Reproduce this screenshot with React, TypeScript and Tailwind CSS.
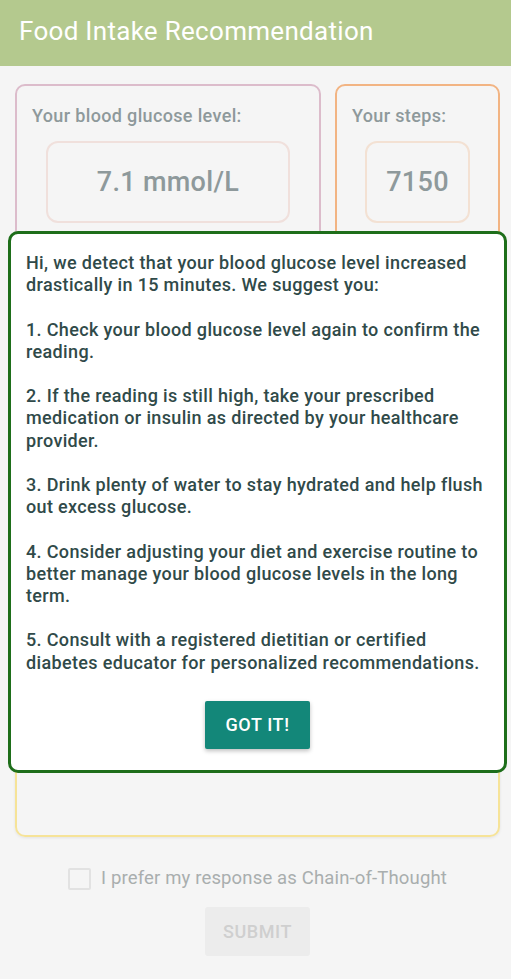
import { useState } from 'react'

const tips = [
  ['Hi, we detect that your blood glucose level increased', 'drastically in 15 minutes. We suggest you:'],
  ['1. Check your blood glucose level again to confirm the', 'reading.'],
  ['2. If the reading is still high, take your prescribed', 'medication or insulin as directed by your healthcare', 'provider.'],
  ['3. Drink plenty of water to stay hydrated and help flush', 'out excess glucose.'],
  ['4. Consider adjusting your diet and exercise routine to', 'better manage your blood glucose levels in the long', 'term.'],
  ['5. Consult with a registered dietitian or certified', 'diabetes educator for personalized recommendations.'],
]

function StatCard({ label, value, outer, inner, width, innerWidth }: {
  label: string
  value: string
  outer: string
  inner: string
  width: string
  innerWidth: string
}) {
  return (
    <div className={`${width} shrink-0 h-[190px] rounded-[10px] border-2 ${outer} pt-[19px] px-[15px]`}>
      <div className="text-[18px] tracking-[0.35px] font-medium text-[#8e999b] leading-[22px] whitespace-nowrap">{label}</div>
      <div className={`${innerWidth} mx-auto mt-[14px] h-[82px] rounded-[12px] border-2 ${inner} flex items-center justify-center text-[27px] tracking-[0.3px] font-medium text-[#8e999b]`}>
        {value}
      </div>
    </div>
  )
}

export default function App() {
  const [open, setOpen] = useState(true)
  const [cot, setCot] = useState(false)

  return (
    <div className="relative min-h-screen h-[979px] bg-[#f5f5f5] overflow-hidden" style={{ fontFamily: 'Roboto, "Noto Sans", sans-serif' }}>
      <div className="h-[66px] bg-[#b4c98e] flex items-center px-[19px]">
        <h1 className="text-[26px] tracking-[0.3px] text-white leading-none -mt-[4px]">Food Intake Recommendation</h1>
      </div>

      <div className="pl-[15px] pr-[11px] pt-[18px]">
        <div className="flex gap-[14px]">
          <StatCard
            label="Your blood glucose level:"
            value="7.1 mmol/L"
            outer="border-[#dcbccb]"
            inner="border-[#f0e0dc]"
            width="w-[306px]"
            innerWidth="w-[244px]"
          />
          <StatCard
            label="Your steps:"
            value="7150"
            outer="border-[#f2b483]"
            inner="border-[#f3e1d3]"
            width="w-[165px]"
            innerWidth="w-[105px]"
          />
        </div>

        <div className="mt-[18px] h-[545px] rounded-[10px] border-2 border-[#f6e398] shadow-[0_1px_3px_rgba(0,0,0,0.08)] flex flex-col justify-end px-[20px] pb-[58px]">
          <div className="text-center text-[17px] text-[#b0b6b7]">Type your meal here if any</div>
        </div>

        <label className="mt-[28px] flex items-center justify-center gap-[10px] text-[18.5px] tracking-[0.15px] text-[#a9aeae]">
          <input
            type="checkbox"
            checked={cot}
            onChange={e => setCot(e.target.checked)}
            className="appearance-none w-[23px] h-[22px] border-2 border-[#e2e2e2] rounded-[2px] bg-[#f5f5f5]"
          />
          I prefer my response as Chain-of-Thought
        </label>

        <div className="mt-[14px] flex justify-center">
          <button className="w-[105px] h-[49px] bg-[#ececec] text-[#cfcfcf] text-[18px] tracking-[0.6px] font-medium rounded-[3px]">
            SUBMIT
          </button>
        </div>
      </div>

      {open && (
        <div className="absolute left-[8px] top-[231px] w-[499px] h-[542px] bg-white rounded-[10px] border-[3px] border-[#1e6e1a] pt-[18px] px-[15px]">
          <div className="text-[18px] tracking-[0.35px] font-medium leading-[22.2px] text-[#304a49] space-y-[22.2px] whitespace-nowrap">
            {tips.map(lines => (
              <p key={lines[0]}>
                {lines.map((l, i) => (
                  <span key={i} className="block">{l}</span>
                ))}
              </p>
            ))}
          </div>
          <div className="mt-[27px] flex justify-center">
            <button
              onClick={() => setOpen(false)}
              className="w-[105px] h-[48px] bg-[#138779] text-white text-[18px] tracking-[0.6px] font-medium rounded-[2px] shadow-[0_2px_4px_rgba(0,0,0,0.25)]"
            >
              GOT IT!
            </button>
          </div>
        </div>
      )}
    </div>
  )
}
